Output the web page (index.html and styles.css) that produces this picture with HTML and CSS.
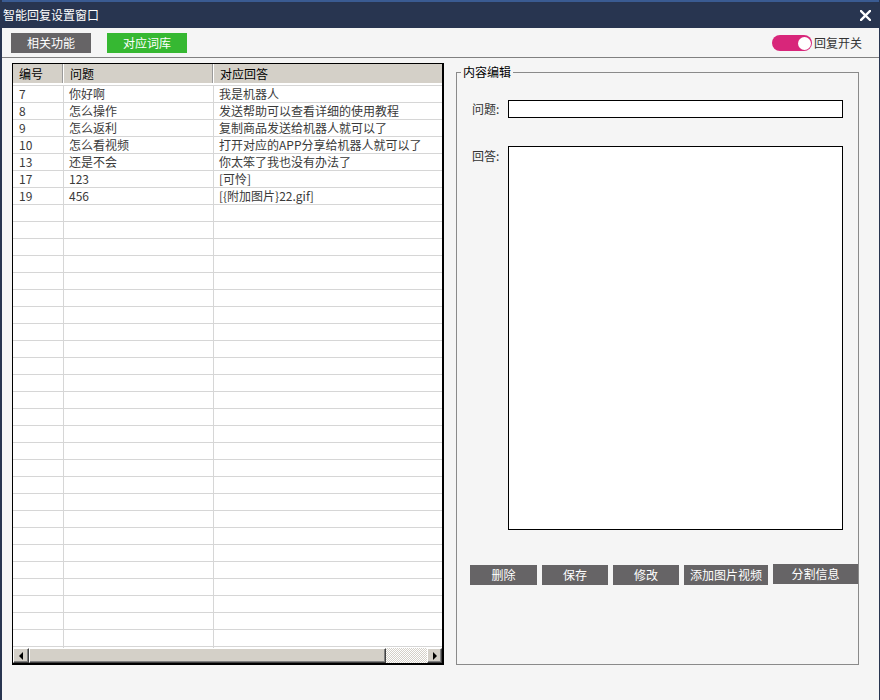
FILE: index.html
```html
<!DOCTYPE html>
<html lang="zh-CN">
<head>
<meta charset="utf-8">
<title>智能回复设置窗口</title>
<link rel="stylesheet" href="styles.css">
</head>
<body>
<div class="window">
  <header class="titlebar">
    <span class="title">智能回复设置窗口</span>
    <button class="close" aria-label="关闭">
      <svg width="11" height="11" viewBox="0 0 11 11"><path d="M1 1 L10 10 M10 1 L1 10" stroke="#fff" stroke-width="2.4" stroke-linecap="square"/></svg>
    </button>
  </header>
  <div class="toolbar">
    <div class="tabs">
      <button class="tab tab-grey">相关功能</button>
      <button class="tab tab-green">对应词库</button>
    </div>
    <div class="switch-wrap">
      <span class="switch"><span class="knob"></span></span>
      <span class="switch-label">回复开关</span>
    </div>
  </div>
  <div class="main">
    <div class="grid">
      <div class="grid-head">
        <div class="hc c1">编号</div>
        <div class="hc c2">问题</div>
        <div class="hc c3">对应回答</div>
      </div>
      <div class="rows">
        <div class="row"><div class="c c1">7</div><div class="c c2">你好啊</div><div class="c c3">我是机器人</div></div>
        <div class="row"><div class="c c1">8</div><div class="c c2">怎么操作</div><div class="c c3">发送帮助可以查看详细的使用教程</div></div>
        <div class="row"><div class="c c1">9</div><div class="c c2">怎么返利</div><div class="c c3">复制商品发送给机器人就可以了</div></div>
        <div class="row"><div class="c c1">10</div><div class="c c2">怎么看视频</div><div class="c c3">打开对应的APP分享给机器人就可以了</div></div>
        <div class="row"><div class="c c1">13</div><div class="c c2">还是不会</div><div class="c c3">你太笨了我也没有办法了</div></div>
        <div class="row"><div class="c c1">17</div><div class="c c2">123</div><div class="c c3">[可怜]</div></div>
        <div class="row"><div class="c c1">19</div><div class="c c2">456</div><div class="c c3">[{附加图片}22.gif]</div></div>
        <div class="row"><div class="c c1"></div><div class="c c2"></div><div class="c c3"></div></div>
        <div class="row"><div class="c c1"></div><div class="c c2"></div><div class="c c3"></div></div>
        <div class="row"><div class="c c1"></div><div class="c c2"></div><div class="c c3"></div></div>
        <div class="row"><div class="c c1"></div><div class="c c2"></div><div class="c c3"></div></div>
        <div class="row"><div class="c c1"></div><div class="c c2"></div><div class="c c3"></div></div>
        <div class="row"><div class="c c1"></div><div class="c c2"></div><div class="c c3"></div></div>
        <div class="row"><div class="c c1"></div><div class="c c2"></div><div class="c c3"></div></div>
        <div class="row"><div class="c c1"></div><div class="c c2"></div><div class="c c3"></div></div>
        <div class="row"><div class="c c1"></div><div class="c c2"></div><div class="c c3"></div></div>
        <div class="row"><div class="c c1"></div><div class="c c2"></div><div class="c c3"></div></div>
        <div class="row"><div class="c c1"></div><div class="c c2"></div><div class="c c3"></div></div>
        <div class="row"><div class="c c1"></div><div class="c c2"></div><div class="c c3"></div></div>
        <div class="row"><div class="c c1"></div><div class="c c2"></div><div class="c c3"></div></div>
        <div class="row"><div class="c c1"></div><div class="c c2"></div><div class="c c3"></div></div>
        <div class="row"><div class="c c1"></div><div class="c c2"></div><div class="c c3"></div></div>
        <div class="row"><div class="c c1"></div><div class="c c2"></div><div class="c c3"></div></div>
        <div class="row"><div class="c c1"></div><div class="c c2"></div><div class="c c3"></div></div>
        <div class="row"><div class="c c1"></div><div class="c c2"></div><div class="c c3"></div></div>
        <div class="row"><div class="c c1"></div><div class="c c2"></div><div class="c c3"></div></div>
        <div class="row"><div class="c c1"></div><div class="c c2"></div><div class="c c3"></div></div>
        <div class="row"><div class="c c1"></div><div class="c c2"></div><div class="c c3"></div></div>
        <div class="row"><div class="c c1"></div><div class="c c2"></div><div class="c c3"></div></div>
        <div class="row"><div class="c c1"></div><div class="c c2"></div><div class="c c3"></div></div>
        <div class="row"><div class="c c1"></div><div class="c c2"></div><div class="c c3"></div></div>
        <div class="row"><div class="c c1"></div><div class="c c2"></div><div class="c c3"></div></div>
        <div class="row"><div class="c c1"></div><div class="c c2"></div><div class="c c3"></div></div>
        <div class="row"><div class="c c1"></div><div class="c c2"></div><div class="c c3"></div></div>
        <div class="row"><div class="c c1"></div><div class="c c2"></div><div class="c c3"></div></div>
      </div>
      <div class="hscroll">
        <span class="sb-btn"><span class="arrow-left"></span></span>
        <span class="sb-thumb"></span>
        <span class="sb-track"></span>
        <span class="sb-btn sb-btn-r"><span class="arrow-right"></span></span>
      </div>
    </div>
    <fieldset class="group">
      <legend class="legend">内容编辑</legend>
      <div class="field field-q">
        <label class="flabel">问题:</label>
        <input class="input" type="text">
      </div>
      <div class="field field-a">
        <label class="flabel flabel-top">回答:</label>
        <textarea class="textarea"></textarea>
      </div>
      <div class="actions">
        <button class="act act-del">删除</button>
        <button class="act">保存</button>
        <button class="act">修改</button>
        <button class="act act-wide">添加图片视频</button>
        <button class="act act-wide act-split">分割信息</button>
      </div>
    </fieldset>
  </div>
</div>
</body>
</html>
```

FILE: styles.css
```css
* { box-sizing: border-box; }
html, body { margin: 0; padding: 0; }
body {
  font-family: "Noto Sans CJK SC", "Liberation Sans", sans-serif;
  font-size: 12px;
  background: #f5f5f5;
  width: 880px;
  height: 700px;
  overflow: hidden;
}
.window {
  width: 880px;
  height: 700px;
  background: #f5f5f5;
  border-left: 2px solid #283550;
  border-right: 1px solid #283550;
  display: flex;
  flex-direction: column;
}
.titlebar {
  height: 28px;
  border-top: 2px solid #3a5b92;
  background: #283550;
  display: flex;
  align-items: center;
  justify-content: space-between;
  padding: 0 0 0 1px;
  flex: none;
}
.title {
  color: #fff;
  font-size: 12px;
  line-height: 14px;
  margin-top: -1px;
}
.close {
  background: none;
  border: 0;
  padding: 0;
  margin: 0 8px 0 0;
  width: 11px;
  height: 11px;
  display: flex;
}
.toolbar {
  height: 30px;
  border-bottom: 1px solid #808080;
  display: flex;
  align-items: flex-start;
  justify-content: space-between;
  padding: 5px 17px 0 9px;
  flex: none;
}
.tabs { display: flex; gap: 16px; }
.tab {
  width: 80px;
  height: 20px;
  border: 0;
  padding: 0;
  color: #fff;
  font-family: inherit;
  font-size: 12px;
  line-height: 20px;
}
.tab-grey { background: #666466; }
.tab-green { background: #36b832; }
.switch-wrap {
  display: flex;
  align-items: center;
  gap: 2px;
  margin-top: 2px;
}
.switch {
  width: 40px;
  height: 16px;
  border-radius: 8px;
  background: #d8267a;
  display: flex;
  justify-content: flex-end;
  align-items: center;
  padding-right: 1px;
}
.knob {
  width: 13px;
  height: 13px;
  border-radius: 50%;
  background: #fff;
}
.switch-label { color: #333; font-size: 12px; line-height: 16px; }

.main {
  display: flex;
  align-items: flex-start;
  padding: 5px 0 0 10px;
}
.grid {
  width: 432px;
  height: 602px;
  border-top: 1px solid #000;
  border-left: 1px solid #000;
  border-right: 2px solid #000;
  border-bottom: 2px solid #000;
  background: #fff;
  display: flex;
  flex-direction: column;
  flex: none;
}
.grid-head {
  height: 19px;
  background: #d4d0c8;
  display: flex;
  flex: none;
}
.hc {
  color: #000;
  line-height: 19px;
  padding-left: 6px;
  border-right: 1px solid #fff;
  box-shadow: inset -1px 0 #9a9a9a;
}
.hc.c3 { border-right: 0; box-shadow: none; padding-left: 6px; }
.c1 { width: 51px; flex: none; }
.c2 { width: 150px; flex: none; }
.c3 { flex: 1; }
.rows {
  flex: 1;
  overflow: hidden;
  padding-top: 2px;
}
.row {
  display: flex;
  height: 17px;
  border-top: 1px solid #d6d6d6;
}
.c {
  height: 16px;
  line-height: 16px;
  padding-left: 5px;
  color: #3a3a3a;
  white-space: nowrap;
  border-right: 1px solid #d6d6d6;
}
.c.c1 { padding-left: 6px; }
.c.c3 { border-right: 0; }

.hscroll {
  height: 15px;
  display: flex;
  flex: none;
}
.sb-btn, .sb-thumb {
  background: #d4d0c8;
  border-top: 1px solid #fff;
  border-left: 1px solid #fff;
  border-right: 1px solid #404040;
  border-bottom: 1px solid #404040;
  box-shadow: inset -1px -1px #808080;
}
.sb-btn {
  width: 16px;
  flex: none;
  display: flex;
  align-items: center;
  justify-content: center;
}
.sb-btn-r { width: 15px; }
.sb-thumb { width: 357px; flex: none; }
.sb-track {
  flex: 1;
  background-color: #fff;
  background-image: repeating-conic-gradient(#d4d0c8 0 25%, #fff 0 50%);
  background-size: 2px 2px;
}
.arrow-left {
  width: 0; height: 0;
  border-top: 4px solid transparent;
  border-bottom: 4px solid transparent;
  border-right: 4px solid #000;
}
.arrow-right {
  width: 0; height: 0;
  border-top: 4px solid transparent;
  border-bottom: 4px solid transparent;
  border-left: 4px solid #000;
}

.group {
  margin: 2px 0 0 12px;
  width: 403px;
  height: 600px;
  border: 1px solid #8a8a8a;
  padding: 21px 0 0 4px;
  min-width: 0;
}
.legend {
  padding: 0 2px;
  margin-left: 0;
  color: #000;
  font-size: 12px;
  line-height: 14px;
}
.field {
  display: flex;
  margin-left: 11px;
}
.field-q { align-items: center; }
.field-a { align-items: flex-start; margin-top: 28px; }
.flabel {
  width: 36px;
  flex: none;
  color: #333;
  font-size: 12px;
  line-height: 18px;
}
.flabel-top { padding-top: 1px; }
.input {
  width: 335px;
  height: 18px;
  border: 1px solid #000;
  background: #fff;
  padding: 0 2px;
  margin: 0;
  outline: none;
}
.textarea {
  width: 335px;
  height: 384px;
  border: 1px solid #000;
  background: #fff;
  margin: 0;
  padding: 0;
  resize: none;
  outline: none;
  display: block;
}
.actions {
  display: flex;
  align-items: flex-start;
  gap: 5px;
  margin: 35px 0 0 9px;
}
.act {
  width: 66px;
  height: 20px;
  border: 0;
  padding: 0;
  background: #666466;
  color: #fff;
  font-family: inherit;
  font-size: 12px;
  line-height: 20px;
}
.act-del { width: 67px; }
.act-wide { width: 84px; }
.act-split { width: 85px; margin-top: -1px; }
```
